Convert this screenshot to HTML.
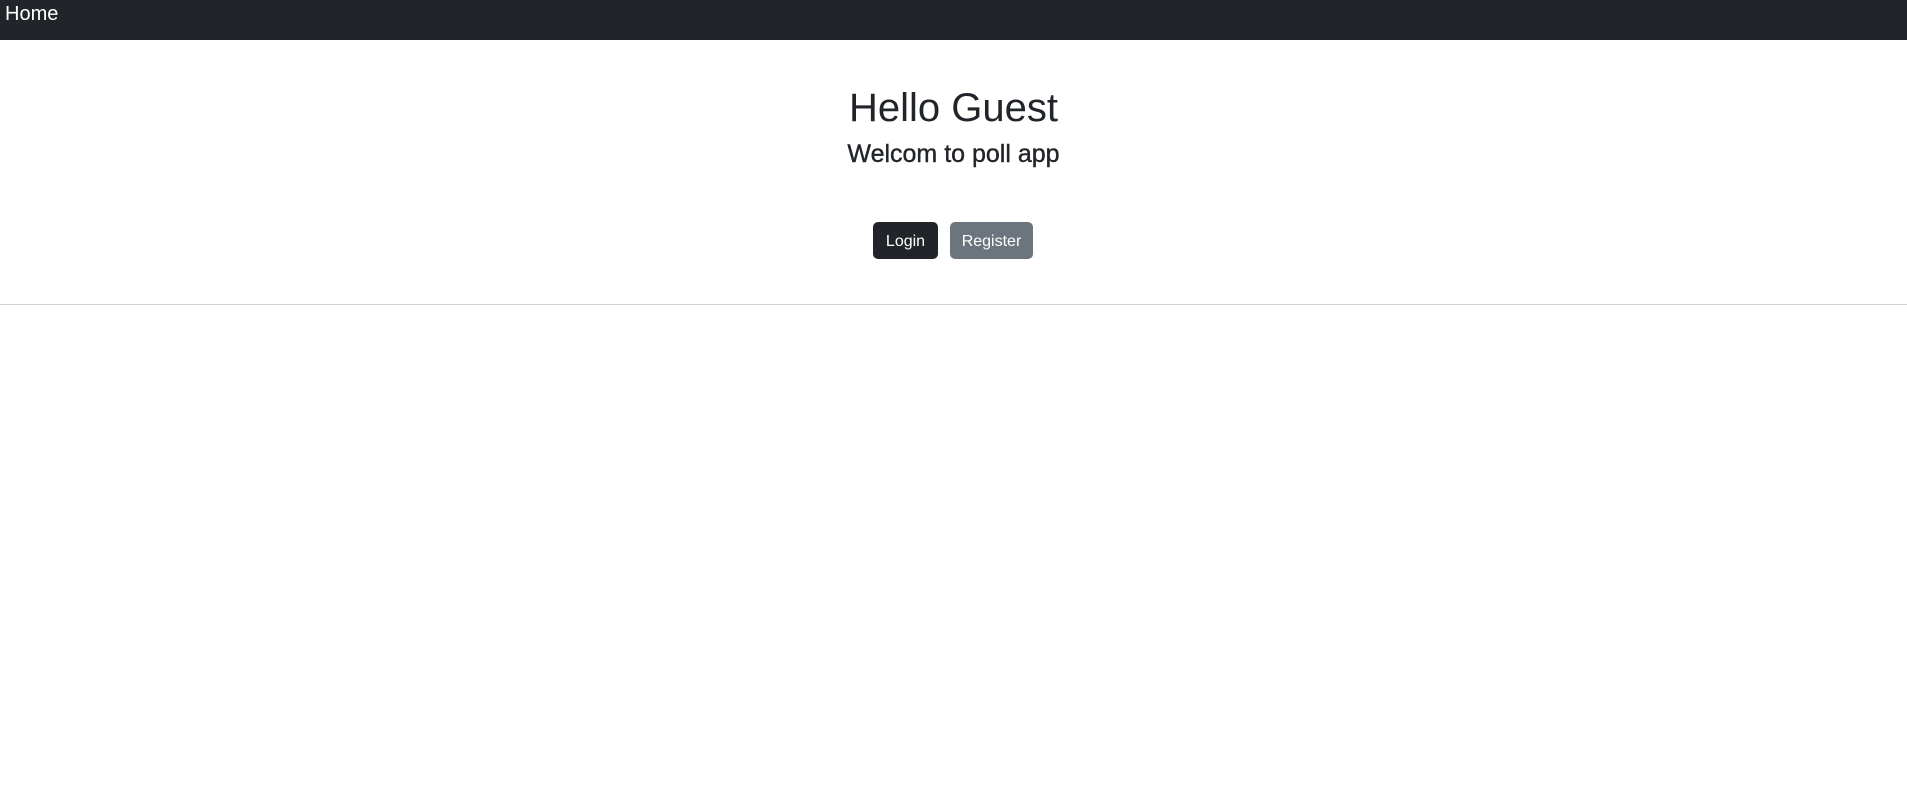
<!DOCTYPE html>
<html><head><meta charset="utf-8"><style>
*{margin:0;padding:0;box-sizing:border-box}
body{width:1907px;height:812px;background:#fff;font-family:"Liberation Sans",sans-serif;color:#212529;position:relative;overflow:hidden}
.nav{position:absolute;left:0;top:0;width:1907px;height:40px;background:#212529}
.nav span{position:absolute;left:5px;top:2px;font-size:20px;line-height:24px;color:#fff}
h1{position:absolute;left:0;width:1907px;top:84px;text-align:center;font-size:40px;font-weight:normal;line-height:48px}
h2{position:absolute;left:0;width:1907px;top:139px;text-align:center;font-size:25px;font-weight:normal;line-height:30px;-webkit-text-stroke:0.4px #212529}
.btn{position:absolute;top:222px;height:37px;border-radius:5px;color:#fff;font-size:16px;line-height:39px;text-align:center}
.l{left:873px;width:65px;background:#212529}
.r{left:950px;width:83px;background:#6c757d}
.hr{position:absolute;left:0;top:304px;width:1907px;height:1px;background:#d3d3d3}
</style></head><body>
<div class="nav"><span>Home</span></div>
<h1>Hello Guest</h1>
<h2>Welcom to poll app</h2>
<div class="btn l">Login</div>
<div class="btn r">Register</div>
<div class="hr"></div>
</body></html>
